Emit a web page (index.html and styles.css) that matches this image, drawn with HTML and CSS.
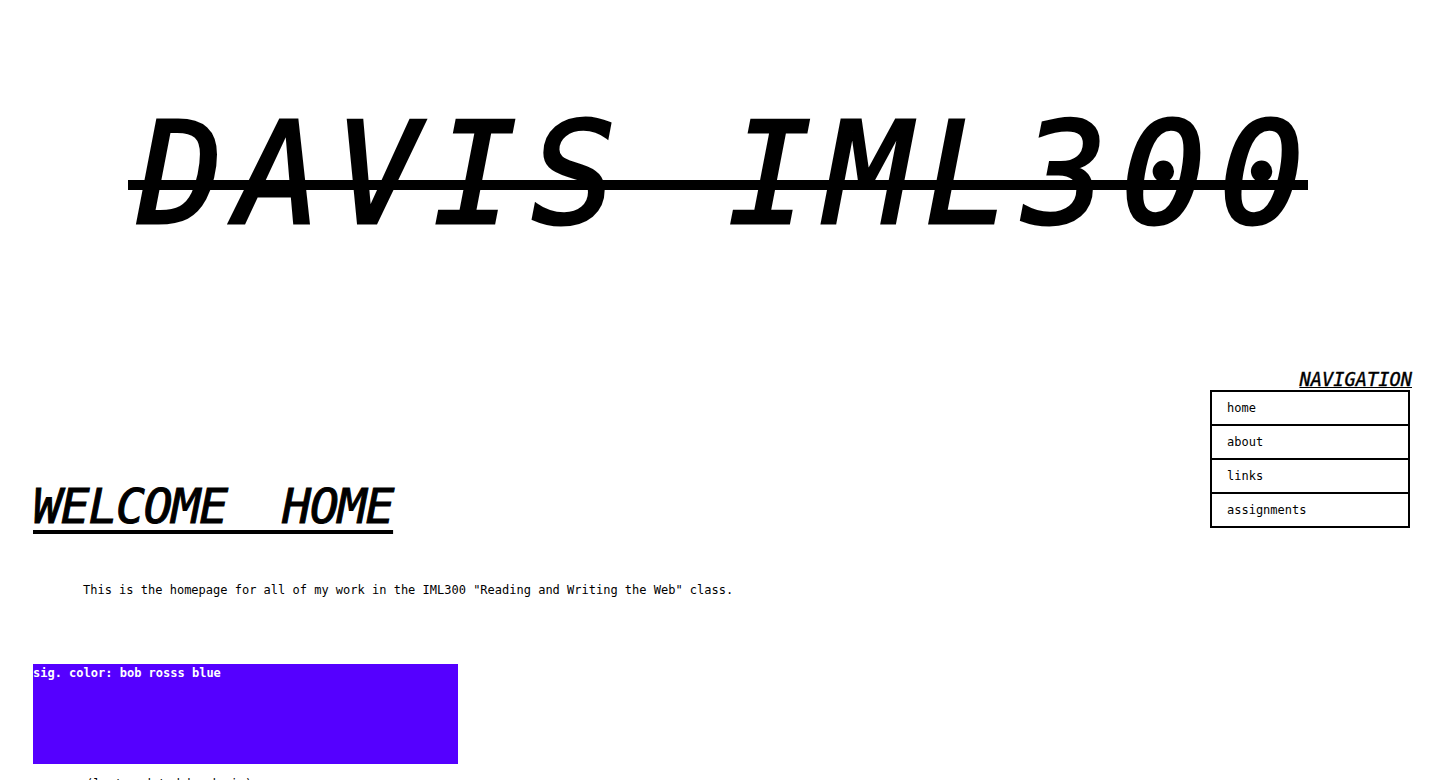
FILE: index.html
```html
<!DOCTYPE html>
<html lang="en">
<head>
<meta charset="utf-8">
<title>Davis IML300</title>
<link rel="stylesheet" href="styles.css">
</head>
<body>
<header class="site-header">
  <h1 class="site-title"><span class="site-title-text">DAVIS IML300</span></h1>
</header>
<div class="layout">
  <main class="main">
    <h2 class="page-title">WELCOME&nbsp; HOME</h2>
    <p class="intro">This is the homepage for all of my work in the IML300 "Reading and Writing the Web" class.</p>
    <div class="sig-box">sig. color: bob rosss blue</div>
    <p class="footnote">(last updated by davis)</p>
  </main>
  <aside class="nav">
    <h3 class="nav-title">NAVIGATION</h3>
    <ul class="nav-list">
      <li class="nav-item"><a class="nav-link" href="#">home</a></li>
      <li class="nav-item"><a class="nav-link" href="#">about</a></li>
      <li class="nav-item"><a class="nav-link" href="#">links</a></li>
      <li class="nav-item"><a class="nav-link" href="#">assignments</a></li>
    </ul>
  </aside>
</div>
</body>
</html>
```

FILE: styles.css
```css
html, body {
  margin: 0;
  padding: 0;
  background: #fff;
  color: #000;
  font-family: "DejaVu Sans Mono", "Liberation Mono", monospace;
}

.site-header {
  padding-top: 93px;
  text-align: center;
}

.site-title {
  margin: 0;
  font-size: 140px;
  line-height: 163px;
  font-weight: normal;
  font-style: italic;
  letter-spacing: 14px;
}

.site-title-text {
  position: relative;
  display: inline-block;
  padding-left: 20px;
  -webkit-text-stroke: 3px #000;
}

.site-title-text::after {
  content: "";
  position: absolute;
  left: 10px;
  right: 10px;
  top: 87px;
  height: 10px;
  background: #000;
}

.layout {
  display: flex;
  justify-content: space-between;
  align-items: flex-start;
  margin-top: 114px;
  padding: 0 24px 0 33px;
}

.main {
  padding-top: 108px;
}

.page-title {
  margin: 0;
  display: inline-block;
  font-size: 48px;
  line-height: 56px;
  font-weight: normal;
  font-style: italic;
  letter-spacing: -1.2px;
  -webkit-text-stroke: 1px #000;
  text-decoration: underline;
  text-decoration-thickness: 4px;
  text-underline-offset: 7px;
}

.intro {
  margin: 49px 0 0;
  font-size: 12px;
  line-height: 14px;
  text-indent: 50px;
}

.sig-box {
  margin-top: 67px;
  box-sizing: border-box;
  width: 425px;
  height: 100px;
  padding-top: 2px;
  background: #5500ff;
  color: #fff;
  font-size: 12px;
  font-weight: bold;
  line-height: 14px;
}

.footnote {
  margin: 13px 0 0;
  font-size: 12px;
  line-height: 14px;
  text-indent: 53px;
}

.nav {
  width: 202px;
}

.nav-title {
  margin: 0;
  font-size: 18.72px;
  line-height: 20px;
  font-weight: normal;
  font-style: italic;
  text-align: right;
  -webkit-text-stroke: 0.4px #000;
  text-decoration: underline;
}

.nav-list {
  list-style: none;
  width: 200px;
  box-sizing: border-box;
  margin: 0;
  padding: 0;
  border: 2px solid #000;
}

.nav-item {
  border-bottom: 2px solid #000;
}

.nav-item:last-child {
  border-bottom: 0;
}

.nav-link {
  display: block;
  height: 32px;
  line-height: 32px;
  padding-left: 15px;
  font-size: 12px;
  color: #000;
  text-decoration: none;
}
```
